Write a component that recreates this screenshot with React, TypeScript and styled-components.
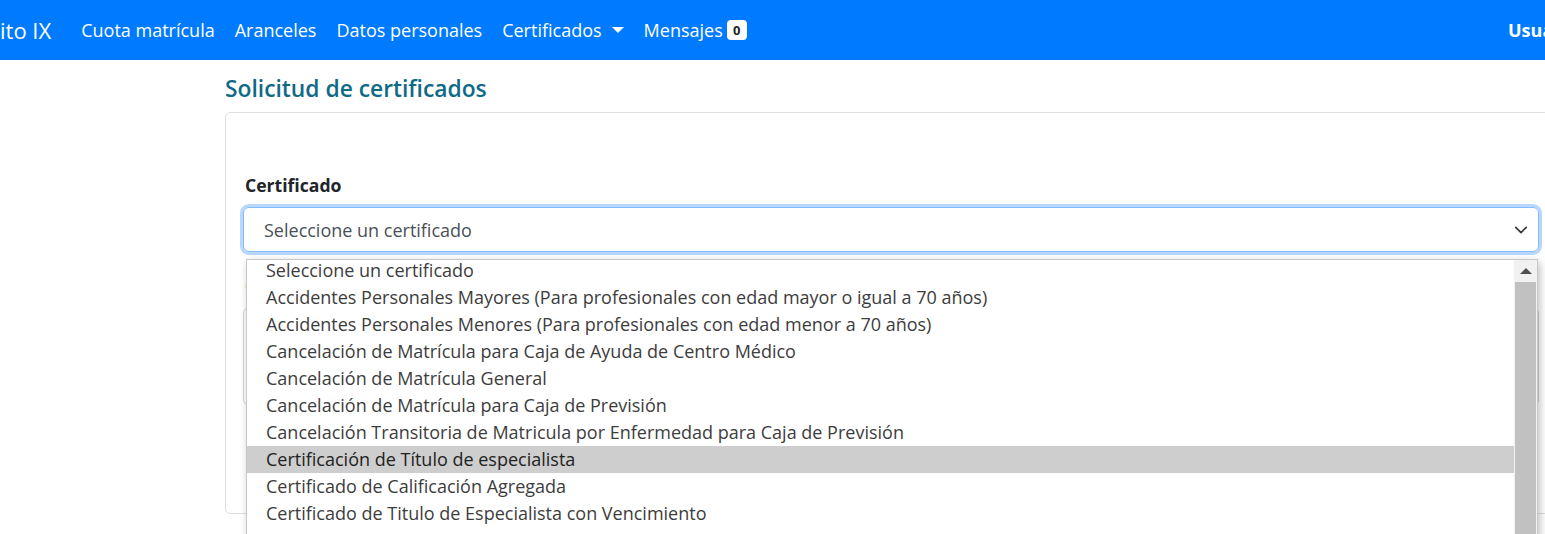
import styled, { createGlobalStyle } from 'styled-components';

const GlobalStyle = createGlobalStyle`
	html, body {
		margin: 0;
		padding: 0;
		background: #fff;
		overflow: hidden;
	}
	body {
		font-family: 'Open Sans', 'Noto Sans', sans-serif;
		font-size: 16px;
		color: #212529;
	}
`;

const navLinks = ['Cuota matrícula', 'Aranceles', 'Datos personales'];

const certificados = [
	'Seleccione un certificado',
	'Accidentes Personales Mayores (Para profesionales con edad mayor o igual a 70 años)',
	'Accidentes Personales Menores (Para profesionales con edad menor a 70 años)',
	'Cancelación de Matrícula para Caja de Ayuda de Centro Médico',
	'Cancelación de Matrícula General',
	'Cancelación de Matrícula para Caja de Previsión',
	'Cancelación Transitoria de Matricula por Enfermedad para Caja de Previsión',
	'Certificación de Título de especialista',
	'Certificado de Calificación Agregada',
	'Certificado de Titulo de Especialista con Vencimiento',
];

const HIGHLIGHTED = 7;

const App = (): JSX.Element => {
	return (
		<>
			<GlobalStyle />
			<StyledNavbar>
				<StyledBrand>ito IX</StyledBrand>
				<StyledNavList>
					{navLinks.map((link) => (
						<StyledNavLink key={link}>{link}</StyledNavLink>
					))}
					<StyledNavLink>
						Certificados
						<StyledCaret />
					</StyledNavLink>
					<StyledNavLink>
						Mensajes
						<StyledBadge>0</StyledBadge>
					</StyledNavLink>
				</StyledNavList>
				<StyledUser>Usuario</StyledUser>
			</StyledNavbar>
			<StyledContainer>
				<StyledTitle>Solicitud de certificados</StyledTitle>
				<StyledCard>
					<StyledField>
						<StyledLabel>Certificado</StyledLabel>
						<StyledSelectWrap>
							<StyledSelect>
								Seleccione un certificado
								<StyledChevron viewBox="0 0 16 16">
									<path
										d="M2 5l6 6 6-6"
										fill="none"
										stroke="#343a40"
										strokeWidth="2"
										strokeLinecap="round"
										strokeLinejoin="round"
									/>
								</StyledChevron>
							</StyledSelect>
							<StyledDropdown>
								<StyledOptions>
									{certificados.map((item, i) => (
										<StyledOption key={item} active={i === HIGHLIGHTED}>
											{item}
										</StyledOption>
									))}
								</StyledOptions>
								<StyledScrollbar>
									<StyledArrow />
									<StyledThumb />
								</StyledScrollbar>
							</StyledDropdown>
						</StyledSelectWrap>
					</StyledField>
					<StyledField>
						<StyledLabel>Observaciones</StyledLabel>
						<StyledTextarea />
					</StyledField>
				</StyledCard>
			</StyledContainer>
		</>
	);
};

export default App;

const StyledNavbar = styled.nav`
	display: flex;
	align-items: center;
	height: 60px;
	background: #007bff;
	color: #fff;
	white-space: nowrap;
`;
const StyledBrand = styled.div`
	font-size: 22px;
	margin-right: 30px;
`;
const StyledNavList = styled.div`
	display: flex;
	align-items: center;
	gap: 20px;
	flex: 1;
`;
const StyledNavLink = styled.div`
	display: flex;
	align-items: center;
	font-size: 18px;
	color: #fff;
`;
const StyledCaret = styled.span`
	display: inline-block;
	margin-left: 10px;
	border-top: 6px solid #fff;
	border-left: 6px solid transparent;
	border-right: 6px solid transparent;
`;
const StyledBadge = styled.span`
	display: inline-flex;
	align-items: center;
	justify-content: center;
	margin-left: 4px;
	width: 20px;
	height: 20px;
	border-radius: 4px;
	background: #fff;
	color: #212529;
	font-size: 13px;
	font-weight: 700;
`;
const StyledUser = styled.div`
	font-weight: 700;
	font-size: 18px;
	width: 37px;
`;
const StyledContainer = styled.main`
	padding: 13px 0 20px 225px;
`;
const StyledTitle = styled.h2`
	margin: 0 0 8px 0;
	font-size: 22.8px;
	font-weight: 600;
	line-height: 31px;
	color: #0f6a86;
`;
const StyledCard = styled.section`
	display: flex;
	flex-direction: column;
	gap: 22px;
	width: 1332px;
	height: 402px;
	box-sizing: border-box;
	padding: 60px 17px 0;
	border: 1px solid #dfdfdf;
	border-radius: 5px;
`;
const StyledField = styled.div`
	display: flex;
	flex-direction: column;
	gap: 10px;
`;
const StyledLabel = styled.label`
	font-weight: 700;
	font-size: 17.6px;
	line-height: 24px;
	padding-left: 2px;
	color: #212529;
`;
const StyledSelectWrap = styled.div`
	position: relative;
`;
const StyledSelect = styled.div`
	display: flex;
	align-items: center;
	justify-content: space-between;
	height: 45px;
	box-sizing: border-box;
	padding: 0 10px 0 20px;
	border: 1px solid #80bdff;
	border-radius: 6px;
	box-shadow: 0 0 0 3px #b9d7fc;
	font-size: 18px;
	color: #495057;
`;
const StyledChevron = styled.svg`
	width: 14px;
	height: 14px;
`;
const StyledDropdown = styled.div`
	position: absolute;
	top: 52px;
	left: 3px;
	width: 1290px;
	height: 290px;
	display: flex;
	background: #fff;
	border: 1px solid #c8c8c8;
	box-shadow: 2px 3px 8px rgba(0, 0, 0, 0.25);
	overflow: hidden;
	z-index: 5;
`;
const StyledOptions = styled.div`
	flex: 1;
	display: flex;
	flex-direction: column;
	margin-top: -3px;
`;
type StyledOptionProps = {
	active: boolean;
};
const StyledOption = styled.div<StyledOptionProps>(
	({ active }) => `
	flex: none;
	height: 27px;
	line-height: 27px;
	padding-left: 19px;
	font-size: 18px;
	color: ${active ? '#222' : '#3d3d3d'};
	background: ${active ? '#cecece' : 'transparent'};
	white-space: nowrap;
	`
);
const StyledScrollbar = styled.div`
	display: flex;
	flex-direction: column;
	align-items: center;
	width: 23px;
	background: #f1f1f1;
`;
const StyledArrow = styled.span`
	margin: 8px 0 8px;
	border-bottom: 6px solid #505050;
	border-left: 6px solid transparent;
	border-right: 6px solid transparent;
`;
const StyledThumb = styled.div`
	width: 21px;
	flex: 1;
	background: #c1c1c1;
`;
const StyledTextarea = styled.div`
	height: 95px;
	border: 1px solid #ced4da;
	border-radius: 5px;
`;
